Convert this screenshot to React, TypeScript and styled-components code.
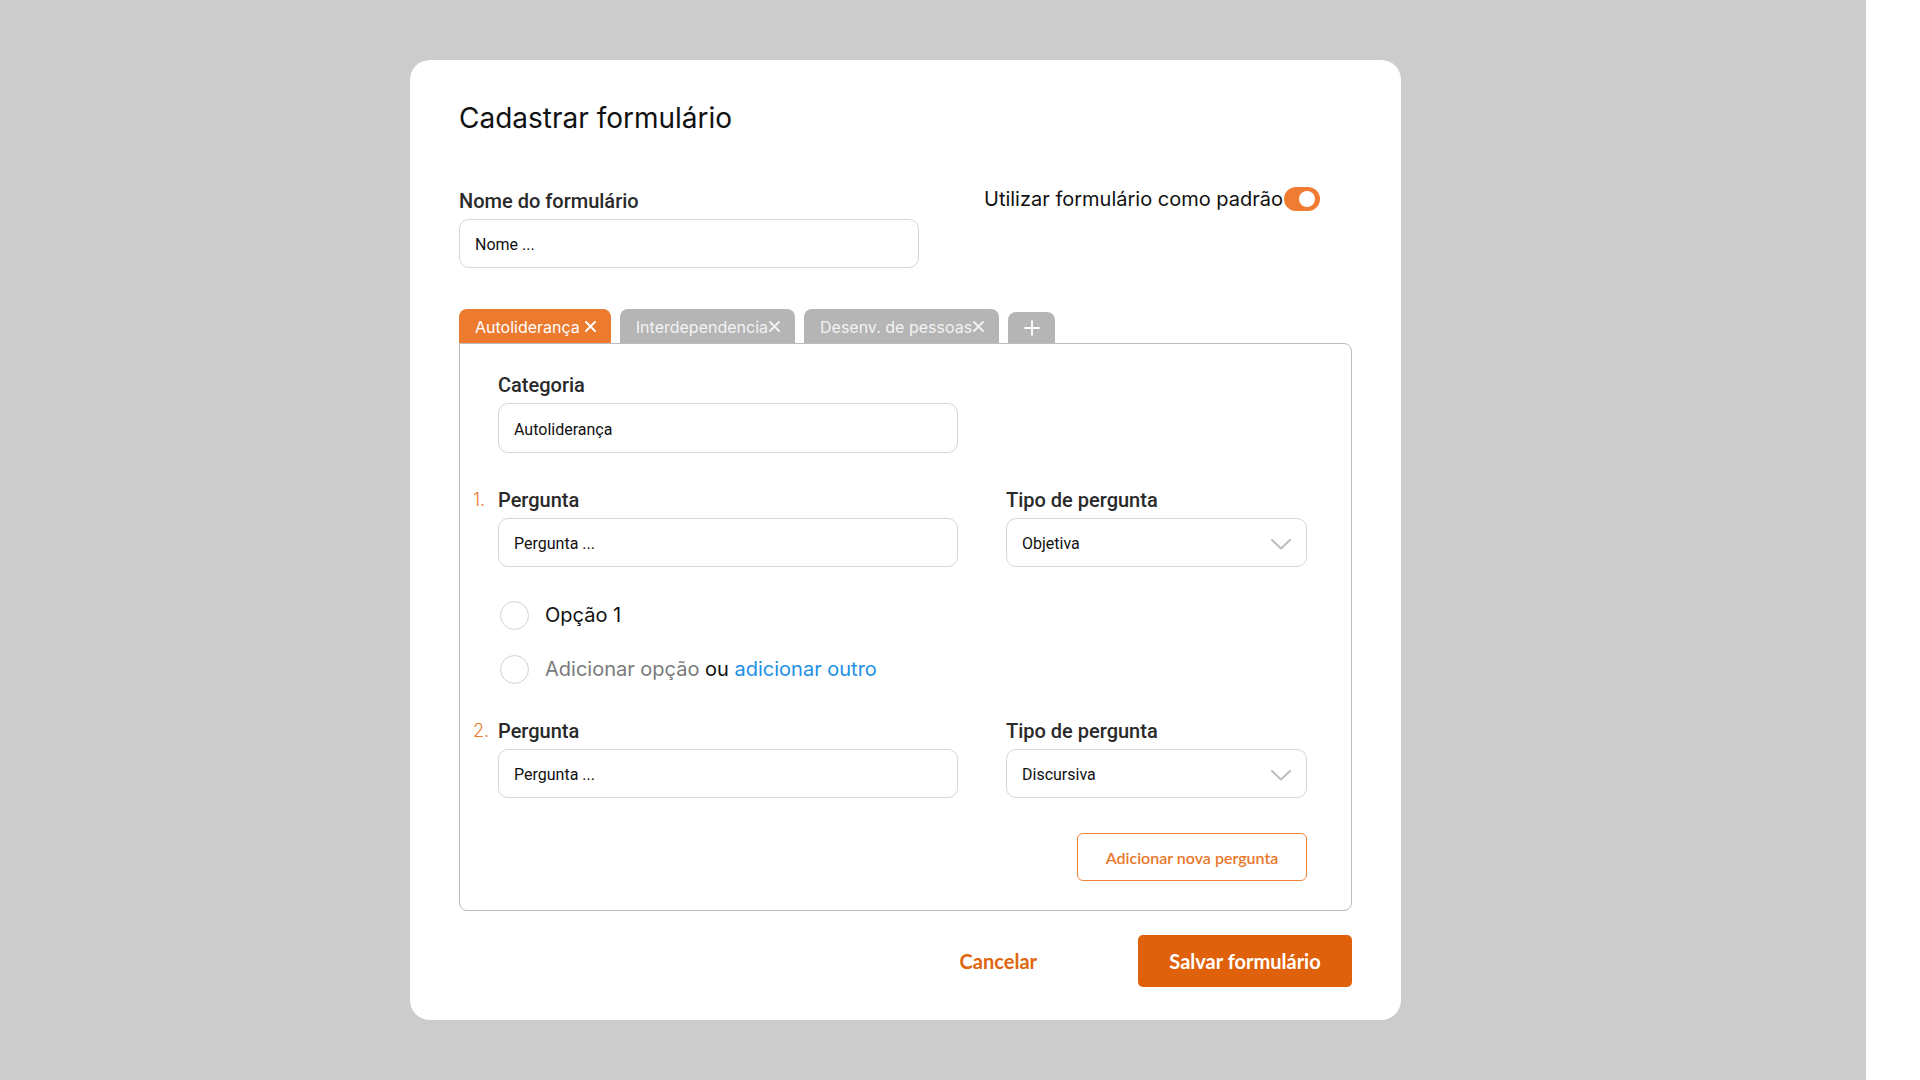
import React from "react";
import styled, { createGlobalStyle } from "styled-components";

const GlobalStyle = createGlobalStyle`
  html, body { margin: 0; padding: 0; background: #ffffff; }
  * { box-sizing: border-box; }
`;

const ORANGE = "#ec7a2f";
const DARK_ORANGE = "#e0610b";

const Backdrop = styled.div`
  width: 1866px;
  height: 1080px;
  background: #cccccc;
  padding: 60px 0 0 410px;
`;

const Modal = styled.div`
  width: 991px;
  height: 960px;
  background: #ffffff;
  border-radius: 20px;
  padding: 41px 49px 0;
  display: flex;
  flex-direction: column;
`;

const Title = styled.h1`
  margin: 0;
  font: 400 28px/34px Inter, "Noto Sans", sans-serif;
  color: #111111;
`;

const TopRow = styled.div`
  display: flex;
  align-items: flex-start;
  margin-top: 54px;
`;

const Field = styled.div<{ $width: number }>`
  width: ${(p) => p.$width}px;
  display: flex;
  flex-direction: column;
`;

const Label = styled.label`
  font: 500 20px/24px Roboto, "Noto Sans", sans-serif;
  color: #2a2a2a;
  margin-bottom: 6px;
`;

const TextInput = styled.div<{ $height?: number }>`
  height: ${(p) => p.$height ?? 50}px;
  border: 1px solid #d6d6d6;
  border-radius: 10px;
  padding: 3px 15px 0;
  display: flex;
  align-items: center;
  justify-content: space-between;
  font: 400 16px/20px Roboto, "Noto Sans", sans-serif;
  color: #111111;
  background: #ffffff;
`;

const DefaultGroup = styled.div`
  display: flex;
  align-items: center;
  height: 24px;
  margin-left: 65px;
  margin-top: -2px;
  font: 400 20px/24px Inter, "Noto Sans", sans-serif;
  color: #111111;
`;

const Toggle = styled.div`
  width: 36px;
  height: 24px;
  border-radius: 12px;
  background: #ef7c32;
  display: flex;
  align-items: center;
  justify-content: flex-end;
  padding-right: 5px;
  margin-left: 1px;
`;

const Knob = styled.span`
  width: 16px;
  height: 16px;
  border-radius: 50%;
  background: #ffffff;
`;

const TabsRow = styled.div`
  display: flex;
  align-items: flex-end;
  gap: 9px;
  margin-top: 41px;
`;

const Tab = styled.div<{ $active?: boolean; $square?: boolean }>`
  height: ${(p) => (p.$square ? 31 : 34)}px;
  width: ${(p) => (p.$square ? "47px" : "auto")};
  padding: ${(p) => (p.$square ? "0" : "1px 15px 0 16px")};
  border-radius: 8px 8px 0 0;
  background: ${(p) => (p.$active ? ORANGE : "#b5b5b5")};
  color: ${(p) => (p.$active ? "#ffffff" : "#f3f3f3")};
  display: flex;
  align-items: center;
  justify-content: center;
  gap: ${(p) => (p.$active ? "5px" : "1px")};
  font: 400 16px/20px Inter, "Noto Sans", sans-serif;
  white-space: nowrap;
`;

const Panel = styled.div`
  border: 1px solid #bcbcbc;
  border-radius: 0 8px 8px 8px;
  padding: 29px 44px 29px 13px;
  display: flex;
  flex-direction: column;
`;

const QuestionRow = styled.div<{ $gapTop?: number }>`
  display: flex;
  align-items: flex-start;
  gap: 48px;
  margin-top: ${(p) => p.$gapTop ?? 0}px;
`;

const Numbered = styled.div`
  display: flex;
  align-items: flex-start;
`;

const Number = styled.span`
  width: 25px;
  font: 300 18px/24px Inter, "Noto Sans", sans-serif;
  color: ${ORANGE};
`;

const OptionList = styled.div`
  display: flex;
  flex-direction: column;
  gap: 26px;
  margin: 34px 0 0 27px;
`;

const OptionRow = styled.div`
  display: flex;
  align-items: center;
  gap: 16px;
  height: 28px;
  font: 400 20px/24px Inter, "Noto Sans", sans-serif;
  color: #111111;
`;

const Radio = styled.span`
  width: 29px;
  height: 29px;
  border-radius: 50%;
  border: 1.5px solid #d2d2d2;
`;

const Muted = styled.span`
  color: #7a7a7a;
`;

const Link = styled.a`
  color: #1d8fe6;
  text-decoration: none;
`;

const ButtonRow = styled.div`
  display: flex;
  justify-content: flex-end;
  margin-top: 35px;
`;

const OutlineButton = styled.button`
  width: 230px;
  height: 48px;
  border: 1.5px solid #ee8238;
  border-radius: 6px;
  background: #ffffff;
  color: #e8772c;
  font: 600 16px/20px Lato, "Open Sans", sans-serif;
  padding-top: 2px;
  cursor: pointer;
`;

const Footer = styled.div`
  display: flex;
  justify-content: flex-end;
  align-items: center;
  gap: 101px;
  margin-top: 24px;
`;

const TextButton = styled.button`
  border: none;
  background: none;
  padding: 0;
  color: #e0650f;
  font: 700 20px/24px Lato, "Open Sans", sans-serif;
  cursor: pointer;
`;

const PrimaryButton = styled.button`
  width: 214px;
  height: 52px;
  border: none;
  border-radius: 5px;
  background: ${DARK_ORANGE};
  color: #ffffff;
  font: 700 20px/24px Lato, "Open Sans", sans-serif;
  cursor: pointer;
`;

const CloseIcon = () => (
  <svg width="11" height="11" viewBox="0 0 11 11" fill="none">
    <path d="M1 1L10 10M10 1L1 10" stroke="currentColor" strokeWidth="1.8" strokeLinecap="round" />
  </svg>
);

const PlusIcon = () => (
  <svg width="16" height="16" viewBox="0 0 16 16" fill="none">
    <path d="M8 1V15M1 8H15" stroke="#ffffff" strokeWidth="1.8" strokeLinecap="round" />
  </svg>
);

const Chevron = () => (
  <svg width="20" height="11" viewBox="0 0 20 11" fill="none">
    <path d="M1 1L10 9.5L19 1" stroke="#bdbdbd" strokeWidth="2" strokeLinecap="round" strokeLinejoin="round" />
  </svg>
);

const tabs = [
  { label: "Autoliderança", active: true },
  { label: "Interdependencia", active: false },
  { label: "Desenv. de pessoas", active: false },
];

type QuestionProps = { n: number; type: string; gapTop: number };

const Question = ({ n, type, gapTop }: QuestionProps) => (
  <QuestionRow $gapTop={gapTop}>
    <Numbered>
      <Number>{n}.</Number>
      <Field $width={460}>
        <Label>Pergunta</Label>
        <TextInput $height={49}>Pergunta ...</TextInput>
      </Field>
    </Numbered>
    <Field $width={301}>
      <Label>Tipo de pergunta</Label>
      <TextInput $height={49}>
        {type}
        <Chevron />
      </TextInput>
    </Field>
  </QuestionRow>
);

export default function App() {
  return (
    <>
      <GlobalStyle />
      <Backdrop>
        <Modal>
          <Title>Cadastrar formulário</Title>
          <TopRow>
            <Field $width={460}>
              <Label>Nome do formulário</Label>
              <TextInput $height={49}>Nome ...</TextInput>
            </Field>
            <DefaultGroup>
              Utilizar formulário como padrão
              <Toggle>
                <Knob />
              </Toggle>
            </DefaultGroup>
          </TopRow>

          <TabsRow>
            {tabs.map((t) => (
              <Tab key={t.label} $active={t.active}>
                {t.label}
                <CloseIcon />
              </Tab>
            ))}
            <Tab $square>
              <PlusIcon />
            </Tab>
          </TabsRow>

          <Panel>
            <QuestionRow>
              <Numbered>
                <Number />
                <Field $width={460}>
                  <Label>Categoria</Label>
                  <TextInput>Autoliderança</TextInput>
                </Field>
              </Numbered>
            </QuestionRow>

            <Question n={1} type="Objetiva" gapTop={35} />

            <OptionList>
              <OptionRow>
                <Radio />
                Opção 1
              </OptionRow>
              <OptionRow>
                <Radio />
                <span>
                  <Muted>Adicionar opção</Muted> ou <Link>adicionar outro</Link>
                </span>
              </OptionRow>
            </OptionList>

            <Question n={2} type="Discursiva" gapTop={36} />

            <ButtonRow>
              <OutlineButton>Adicionar nova pergunta</OutlineButton>
            </ButtonRow>
          </Panel>

          <Footer>
            <TextButton>Cancelar</TextButton>
            <PrimaryButton>Salvar formulário</PrimaryButton>
          </Footer>
        </Modal>
      </Backdrop>
    </>
  );
}
